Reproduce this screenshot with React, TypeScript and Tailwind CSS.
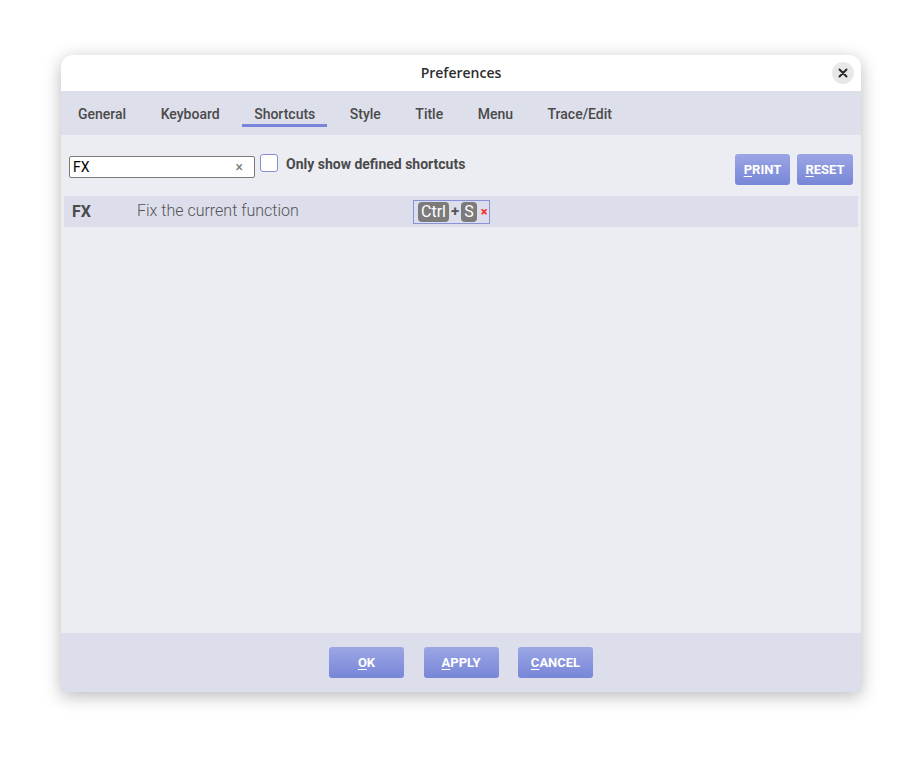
const tabs = ["General", "Keyboard", "Shortcuts", "Style", "Title", "Menu", "Trace/Edit"];

function UButton({ label, className = "" }: { label: string; className?: string }) {
  return (
    <button
      className={`flex h-[31px] items-center justify-center rounded-[3px] bg-gradient-to-b from-[#9ba6e4] to-[#7886d8] text-[13px] font-bold text-white ${className}`}
    >
      <span className="underline decoration-1 underline-offset-2">{label[0]}</span>
      <span>{label.slice(1)}</span>
    </button>
  );
}

export default function App() {
  return (
    <div className="h-[759px] w-[922px] bg-white pl-[61px] pt-[55px] font-['Roboto',sans-serif]">
      <div className="flex h-[637px] w-[800px] flex-col overflow-hidden rounded-t-[12px] bg-[#ecedf3] shadow-[0_4px_18px_rgba(0,0,0,0.28)]">
        {/* title bar */}
        <div className="relative flex h-[36px] shrink-0 items-center justify-center bg-white pb-[2px]">
          <span className="font-['Open_Sans',sans-serif] text-[14px] font-semibold text-[#2e2e2e]">Preferences</span>
          <button className="absolute right-[7px] top-[7px] flex h-[22px] w-[22px] items-center justify-center rounded-full bg-[#e8e8e8]">
            <svg width="10" height="10" viewBox="0 0 10 10">
              <path d="M1.5 1.5 L8.5 8.5 M8.5 1.5 L1.5 8.5" stroke="#2a2a2a" strokeWidth="2" strokeLinecap="round" />
            </svg>
          </button>
        </div>

        {/* tabs */}
        <div className="flex h-[44px] shrink-0 items-stretch gap-[10.5px] bg-[#dddfeb] pl-[5px] pt-[2px]">
          {tabs.map((t) => (
            <div key={t} className="relative flex items-center px-3 text-[14px] font-medium text-[#4a4a4a]">
              {t}
              {t === "Shortcuts" && (
                <div className="absolute bottom-[8px] left-0 right-0 h-[3px] bg-[#7884d9]" />
              )}
            </div>
          ))}
        </div>

        {/* content */}
        <div className="flex flex-1 flex-col px-[3px]">
          <div className="flex items-start pt-[19px]">
            <div className="ml-[5px] mt-[2px] flex h-[22px] w-[186px] items-center justify-between rounded-[2px] border border-[#7a7a7a] bg-white pl-[3px] pr-[11px]">
              <span className="text-[14px] text-black">FX</span>
              <span className="text-[14px] leading-none text-[#777]">×</span>
            </div>
            <div className="ml-[5px] h-[18px] w-[18px] rounded-[3px] border border-[#8590d8] bg-white" />
            <span className="ml-[8px] mt-[1px] text-[14px] font-bold leading-[18px] text-[#4a4a4a]">Only show defined shortcuts</span>
            <div className="ml-auto mr-[5px] flex gap-[7px]">
              <UButton label="PRINT" className="w-[55px]" />
              <UButton label="RESET" className="w-[56px]" />
            </div>
          </div>

          <div className="mt-[11px] flex h-[31px] items-center bg-[#dcdeeb]">
            <span className="w-[73px] pl-[8px] text-[16px] font-bold text-[#4a4a4a]">FX</span>
            <span className="w-[276px] pb-[2px] text-[16px] font-light text-[#555]">Fix the current function</span>
            <div className="flex h-[24px] items-center gap-[2px] border border-[#8893dc] pl-[4px] pr-[1px]">
              <span className="rounded-[4px] bg-[#7b7b7b] px-[3px] text-[16px] leading-[20px] text-white">Ctrl</span>
              <span className="text-[15px] font-bold text-[#555]">+</span>
              <span className="rounded-[4px] bg-[#7b7b7b] px-[3px] text-[16px] leading-[20px] text-white">S</span>
              <span className="ml-[2px] text-[13px] font-bold text-[#ff2020]">×</span>
            </div>
          </div>
        </div>

        {/* footer */}
        <div className="flex h-[59px] shrink-0 items-center justify-center gap-[19.5px] bg-[#dddeeb]">
          <UButton label="OK" className="w-[75px]" />
          <UButton label="APPLY" className="w-[75px]" />
          <UButton label="CANCEL" className="w-[75px]" />
        </div>
      </div>
    </div>
  );
}
